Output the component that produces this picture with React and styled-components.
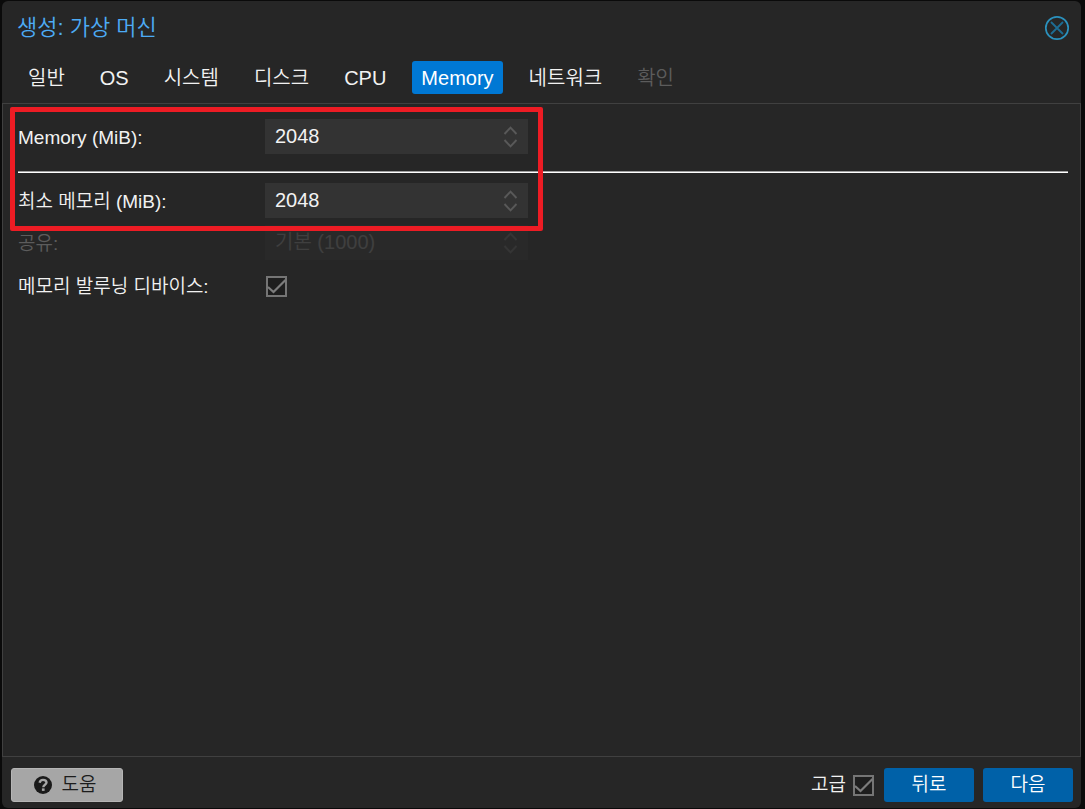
import React, { useState } from "react";
import styled, { createGlobalStyle, css } from "styled-components";

const GlobalStyle = createGlobalStyle`
  * {
    box-sizing: border-box;
  }

  body {
    margin: 0;
    background: #0a0a0a;
    color: #f2f2f2;
    font-family: "Liberation Sans", "Noto Sans CJK KR", sans-serif;
    font-size: 19px;
    font-weight: 350;
    line-height: 24px;
  }

  button, input {
    font: inherit;
    color: inherit;
  }
`;

const Page = styled.div`
  display: flex;
  min-height: 100vh;
  padding: 1px 4px 1px 2px;
`;

const Window = styled.section`
  flex: 1;
  display: flex;
  flex-direction: column;
  background: #262626;
  border-radius: 6px;
`;

const Header = styled.header`
  display: flex;
  align-items: center;
  justify-content: space-between;
  padding: 14px 11px 0 15px;
`;

const Title = styled.h1`
  margin: 0;
  font-size: 22px;
  font-weight: 350;
  line-height: 26px;
  color: #4dabf5;
`;

const CloseButton = styled.button`
  display: flex;
  padding: 0;
  border: 0;
  background: none;
  cursor: pointer;
`;

const Tabs = styled.nav`
  display: flex;
  gap: 17px;
  padding: 20px 17px 9px;
`;

const Tab = styled.button`
  height: 33px;
  padding: 1px 9px 0;
  border: 0;
  border-radius: 3px;
  background: ${({ $active }) => ($active ? "#0078d4" : "transparent")};
  color: ${({ $active }) => ($active ? "#ffffff" : "#f2f2f2")};
  font-size: 20px;
  white-space: nowrap;
  cursor: pointer;

  &:disabled {
    color: #5c5c5c;
    cursor: default;
  }
`;

const Body = styled.main`
  position: relative;
  flex: 1;
  padding: 15px 12px 15px 15px;
  border: 1px solid #404040;
`;

const Form = styled.form`
  display: flex;
  flex-direction: column;
  gap: 7px;
`;

const Row = styled.div`
  display: flex;
  align-items: center;
  min-height: ${({ $tall }) => ($tall ? "38px" : "35px")};
`;

const Label = styled.label`
  width: 247px;
  padding-top: 2px;
  color: ${({ $disabled }) => ($disabled ? "#5c5c5c" : "#f2f2f2")};
`;

const Separator = styled.hr`
  width: 100%;
  height: 2px;
  margin: 10px 0 3px;
  border: 0;
  border-top: 1px solid #a0a0a0;
  background: #ffffff;
`;

const Field = styled.div`
  display: flex;
  align-items: center;
  width: 263px;
  height: 35px;
  padding-right: 10px;
  background: #333333;
  ${({ $disabled }) =>
    $disabled &&
    css`
      opacity: 0.3;
    `}
`;

const NumberInput = styled.input`
  flex: 1;
  min-width: 0;
  height: 35px;
  padding: 0 10px;
  border: 0;
  outline: 0;
  background: none;
  font-size: 20px;

  &::placeholder {
    color: #7a7a7a;
    opacity: 1;
  }
`;

const Spinner = styled.div`
  display: flex;
  flex-direction: column;
  gap: 4px;
`;

const SpinButton = styled.button`
  display: flex;
  padding: 0;
  border: 0;
  background: none;
`;

const CheckWrap = styled.span`
  display: grid;
  width: 21px;
  height: 21px;
  margin: 0 1px;

  > * {
    grid-area: 1 / 1;
  }

  input:not(:checked) + svg {
    visibility: hidden;
  }
`;

const CheckInput = styled.input`
  appearance: none;
  width: 21px;
  height: 21px;
  margin: 0;
  border: 2px solid #757575;
  background: #1e1e1e;
`;

const CheckMark = styled.svg`
  width: 21px;
  height: 21px;
  pointer-events: none;
`;

/* red frame drawn over the memory fields */
const Highlight = styled.div`
  position: absolute;
  top: 3px;
  left: 7px;
  width: 533px;
  height: 124px;
  border: 5px solid #ed1c24;
  border-radius: 2px;
  pointer-events: none;
`;

const Footer = styled.footer`
  display: flex;
  align-items: center;
  gap: 9px;
  padding: 11px 8px 6px 9px;
`;

const Button = styled.button`
  display: flex;
  align-items: center;
  justify-content: center;
  min-width: 90px;
  height: 34px;
  padding: 0 6px;
  border: 0;
  border-radius: 3px;
  background: #0061a8;
  color: #ffffff;
  cursor: pointer;
`;

const HelpButton = styled(Button)`
  gap: 10px;
  min-width: 112px;
  margin-right: auto;
  padding: 0 10px 0 6px;
  border: 1px solid #b5b5b5;
  background: #a6a6a6;
  color: #1c1c1c;
`;

const Advanced = styled.label`
  display: flex;
  align-items: center;
  gap: 6px;
`;

const CloseIcon = () => (
  <svg width="26" height="26" viewBox="0 0 26 26" fill="none">
    <circle cx="13" cy="13" r="11.2" stroke="#2b91bd" strokeWidth="1.7" />
    <path d="M7 7L19 19M19 7L7 19" stroke="#1d6d93" strokeWidth="1.8" />
  </svg>
);

const Chevron = ({ down }) => (
  <svg width="15" height="9" viewBox="0 0 15 9" fill="none">
    <path d={down ? "M1.5 1L7.5 7.3L13.5 1" : "M1.5 8L7.5 1.7L13.5 8"} stroke="#595959" strokeWidth="1.9" />
  </svg>
);

const HelpIcon = () => (
  <svg width="18" height="18" viewBox="0 0 18 18" fill="none">
    <circle cx="9" cy="9" r="9" fill="#1a1a1a" />
    <path d="M5.6 6.8C6 4.8 7.3 3.9 9 3.9C11 3.9 12.5 5 12.5 6.6C12.5 8.8 9.3 8.7 9.3 11.2" stroke="#a6a6a6" strokeWidth="2.4" />
    <rect x="7.9" y="12.4" width="2.7" height="2.5" fill="#a6a6a6" />
  </svg>
);

const tabs = ["일반", "OS", "시스템", "디스크", "CPU", "Memory", "네트워크", "확인"];

const Checkbox = ({ id }) => (
  <CheckWrap>
    <CheckInput id={id} type="checkbox" defaultChecked />
    <CheckMark viewBox="0 0 21 21" fill="none" aria-hidden="true">
      <path d="M2 11L7.5 16L19.5 4" stroke="#7c7c7c" strokeWidth="2.2" />
    </CheckMark>
  </CheckWrap>
);

const NumberField = ({ id, label, value, onChange, placeholder, disabled }) => {
  const step = (amount) => onChange(String(Number(value) + amount));

  return (
    <Row>
      <Label htmlFor={id} $disabled={disabled}>{label}</Label>
      <Field $disabled={disabled}>
        <NumberInput
          id={id}
          type="text"
          inputMode="numeric"
          value={value}
          placeholder={placeholder}
          disabled={disabled}
          onChange={(e) => onChange(e.target.value)}
        />
        <Spinner>
          <SpinButton type="button" aria-label="+" disabled={disabled} onClick={() => step(32)}>
            <Chevron />
          </SpinButton>
          <SpinButton type="button" aria-label="-" disabled={disabled} onClick={() => step(-32)}>
            <Chevron down />
          </SpinButton>
        </Spinner>
      </Field>
    </Row>
  );
};

const App = () => {
  const [active, setActive] = useState("Memory");
  const [memory, setMemory] = useState("2048");
  const [minMemory, setMinMemory] = useState("2048");
  const [shares, setShares] = useState("");

  return (
    <>
      <GlobalStyle />
      <Page>
        <Window>
          <Header>
            <Title>생성: 가상 머신</Title>
            <CloseButton type="button" aria-label="닫기">
              <CloseIcon />
            </CloseButton>
          </Header>
          <Tabs>
            {tabs.map((tab) => (
              <Tab
                key={tab}
                type="button"
                $active={tab === active}
                disabled={tab === "확인"}
                onClick={() => setActive(tab)}
              >
                {tab}
              </Tab>
            ))}
          </Tabs>
          <Body>
            <Form>
              <NumberField id="memory" label="Memory (MiB):" value={memory} onChange={setMemory} />
              <Separator />
              <NumberField id="minMemory" label="최소 메모리 (MiB):" value={minMemory} onChange={setMinMemory} />
              <NumberField id="shares" label="공유:" value={shares} onChange={setShares} placeholder="기본 (1000)" disabled />
              <Row $tall>
                <Label htmlFor="balloon">메모리 발루닝 디바이스:</Label>
                <Checkbox id="balloon" />
              </Row>
            </Form>
            <Highlight />
          </Body>
          <Footer>
            <HelpButton type="button">
              <HelpIcon />
              도움
            </HelpButton>
            <Advanced htmlFor="advanced">
              고급
              <Checkbox id="advanced" />
            </Advanced>
            <Button type="button">뒤로</Button>
            <Button type="button">다음</Button>
          </Footer>
        </Window>
      </Page>
    </>
  );
};

export default App;
